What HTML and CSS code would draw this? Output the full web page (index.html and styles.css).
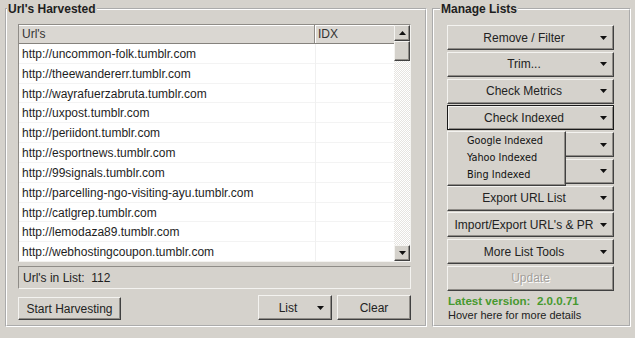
FILE: index.html
```html
<!DOCTYPE html>
<html lang="en">
<head>
  <meta charset="UTF-8">
  <title>Url Harvester</title>
  <link rel="stylesheet" href="styles.css">
</head>
<body>
  <div class="window">
    <fieldset class="group harvest">
      <legend>Url's Harvested</legend>
      <div class="group-body">
        <div class="listview">
          <div class="columns">
            <div class="header">
              <div class="col-url">Url's</div>
              <div class="col-idx">IDX</div>
            </div>
            <div class="row"><div class="col-url">http://uncommon-folk.tumblr.com</div><div class="col-idx"></div></div>
            <div class="row"><div class="col-url">http://theewandererr.tumblr.com</div><div class="col-idx"></div></div>
            <div class="row"><div class="col-url">http://wayrafuerzabruta.tumblr.com</div><div class="col-idx"></div></div>
            <div class="row"><div class="col-url">http://uxpost.tumblr.com</div><div class="col-idx"></div></div>
            <div class="row"><div class="col-url">http://periidont.tumblr.com</div><div class="col-idx"></div></div>
            <div class="row"><div class="col-url">http://esportnews.tumblr.com</div><div class="col-idx"></div></div>
            <div class="row"><div class="col-url">http://99signals.tumblr.com</div><div class="col-idx"></div></div>
            <div class="row"><div class="col-url">http://parcelling-ngo-visiting-ayu.tumblr.com</div><div class="col-idx"></div></div>
            <div class="row"><div class="col-url">http://catlgrep.tumblr.com</div><div class="col-idx"></div></div>
            <div class="row"><div class="col-url">http://lemodaza89.tumblr.com</div><div class="col-idx"></div></div>
            <div class="row"><div class="col-url">http://webhostingcoupon.tumblr.com</div><div class="col-idx"></div></div>
          </div>
          <div class="scrollbar">
            <div class="sb-btn"><svg width="7" height="4" viewBox="0 0 7 4"><path d="M3.5 0L7 4H0z"/></svg></div>
            <div class="sb-thumb"></div>
            <div class="sb-track"></div>
            <div class="sb-btn"><svg width="7" height="4" viewBox="0 0 7 4"><path d="M0 0h7L3.5 4z"/></svg></div>
          </div>
        </div>
        <div class="status">Url's in List:&nbsp; 112</div>
        <div class="actions">
          <button class="btn start">Start Harvesting</button>
          <button class="btn list"><span class="label">List</span><svg class="caret" width="7" height="4" viewBox="0 0 7 4"><path d="M0 0h7L3.5 4z"/></svg></button>
          <button class="btn clear">Clear</button>
        </div>
      </div>
    </fieldset>

    <fieldset class="group manage">
      <legend>Manage Lists</legend>
      <div class="group-body">
        <div class="tools">
          <button class="btn tool"><span class="label">Remove / Filter</span><svg class="caret" width="7" height="4" viewBox="0 0 7 4"><path d="M0 0h7L3.5 4z"/></svg></button>
          <button class="btn tool"><span class="label">Trim...</span><svg class="caret" width="7" height="4" viewBox="0 0 7 4"><path d="M0 0h7L3.5 4z"/></svg></button>
          <button class="btn tool"><span class="label">Check Metrics</span><svg class="caret" width="7" height="4" viewBox="0 0 7 4"><path d="M0 0h7L3.5 4z"/></svg></button>
          <button class="btn tool open"><span class="label">Check Indexed</span><svg class="caret" width="7" height="4" viewBox="0 0 7 4"><path d="M0 0h7L3.5 4z"/></svg></button>
          <button class="btn tool"><span class="label"></span><svg class="caret" width="7" height="4" viewBox="0 0 7 4"><path d="M0 0h7L3.5 4z"/></svg></button>
          <button class="btn tool"><span class="label"></span><svg class="caret" width="7" height="4" viewBox="0 0 7 4"><path d="M0 0h7L3.5 4z"/></svg></button>
          <button class="btn tool"><span class="label">Export URL List</span><svg class="caret" width="7" height="4" viewBox="0 0 7 4"><path d="M0 0h7L3.5 4z"/></svg></button>
          <button class="btn tool"><span class="label">Import/Export URL's &amp; PR</span><svg class="caret" width="7" height="4" viewBox="0 0 7 4"><path d="M0 0h7L3.5 4z"/></svg></button>
          <button class="btn tool"><span class="label">More List Tools</span><svg class="caret" width="7" height="4" viewBox="0 0 7 4"><path d="M0 0h7L3.5 4z"/></svg></button>
          <button class="btn tool disabled" disabled><span class="label">Update</span></button>
        </div>
        <div class="popup">
          <div>Google Indexed</div>
          <div>Yahoo Indexed</div>
          <div>Bing Indexed</div>
        </div>
        <div class="version">
          <div class="latest">Latest version:&nbsp; 2.0.0.71</div>
          <div class="hint">Hover here for more details</div>
        </div>
      </div>
    </fieldset>
  </div>
</body>
</html>
```

FILE: styles.css
```css
body {
  margin: 0;
  background-color: #d5d2cc;
  font-family: "Liberation Sans", Arial, sans-serif;
  font-size: 12px;
  color: #1e1e1e;
}

.window {
  display: flex;
  gap: 5px;
  padding: 2px 0 0 5px;
}

.group {
  margin: 0;
  padding: 0;
  min-width: 0;
  height: 325px;
  box-sizing: border-box;
  border: 2px groove #fff;
}

.harvest {
  width: 422px;
}

.manage {
  width: 199px;
}

legend {
  padding: 0 1px;
  font-weight: bold;
  line-height: 14px;
  color: #1e1e1e;
}

.manage legend {
  margin-left: 6px;
}

.harvest .group-body {
  padding: 8px 14px 0 11px;
}

.manage .group-body {
  position: relative;
  padding: 9px 15px 0 13px;
}

/* list view */
.listview {
  display: flex;
  height: 238px;
  box-sizing: border-box;
  border: 1px solid;
  border-color: #8f8c87 #f4f3f0 #f4f3f0 #8f8c87;
  background-color: #fff;
}

.columns {
  flex: 1;
  overflow: hidden;
}

.header {
  display: flex;
  height: 19px;
  box-sizing: border-box;
  background-color: #dad7d2;
  border-bottom: 1px solid #85827d;
  box-shadow: inset 0 1px #fff;
  line-height: 18px;
  color: #333;
}

.col-url {
  width: 296px;
  padding-left: 3px;
  box-sizing: border-box;
  white-space: nowrap;
}

.col-idx {
  flex: 1;
  padding-left: 3px;
}

.header .col-url {
  border-right: 1px solid #8f8c87;
}

.header .col-idx {
  box-shadow: inset 1px 0 #fff;
}

.row {
  display: flex;
  height: 19.84px;
  line-height: 21px;
  box-shadow: inset 0 -1px #f3f3f3;
}

.row .col-idx {
  border-left: 1px solid #f0f0f0;
}

.scrollbar {
  width: 16px;
  display: flex;
  flex-direction: column;
}

.sb-btn,
.sb-thumb {
  box-sizing: border-box;
  background-color: #d5d2cc;
  border: 1px solid;
  border-color: #f4f3f0 #404040 #404040 #f4f3f0;
  box-shadow: inset -1px -1px #8f8c87;
}

.sb-btn {
  height: 16px;
  display: flex;
  align-items: center;
  justify-content: center;
}

.sb-btn svg {
  fill: #111;
}

.sb-thumb {
  height: 20px;
}

.sb-track {
  flex: 1;
  background: repeating-conic-gradient(#fff 0 25%, #e6e4e0 0 50%) 0 0 / 2px 2px;
}

.status {
  margin-top: 4px;
  height: 23px;
  box-sizing: border-box;
  border: 1px solid;
  border-color: #8f8c87 #f4f3f0 #f4f3f0 #8f8c87;
  padding: 2px 0 0 4px;
  line-height: 19px;
}

.actions {
  display: flex;
  align-items: flex-end;
  gap: 5px;
  margin-top: 6px;
  height: 25px;
}

/* buttons */
.btn {
  display: flex;
  align-items: center;
  justify-content: center;
  padding: 0;
  box-sizing: border-box;
  font: inherit;
  color: #222;
  background-color: #d5d2cc;
  border: 1px solid;
  border-color: #f4f3f0 #404040 #404040 #f4f3f0;
  box-shadow: inset -1px -1px #8f8c87;
}

.btn .label {
  flex: 1;
  text-align: center;
  white-space: nowrap;
}

.btn .caret {
  flex: none;
  fill: #111;
}

.start {
  width: 103px;
  height: 23px;
}

.list {
  width: 74px;
  height: 25px;
  margin-left: auto;
}

.list .caret {
  margin-right: 7px;
}

.clear {
  width: 74px;
  height: 25px;
}

.tools {
  display: flex;
  flex-direction: column;
  gap: 1.78px;
}

.tool {
  width: 100%;
  height: 25px;
}

.tool .caret {
  margin-right: 6px;
}

.tool.open {
  border-color: #1a1a1a;
  box-shadow: inset 1px 1px #f4f3f0, inset -1px -1px #8f8c87;
}

.tool.disabled {
  color: #a3a09b;
  text-shadow: 1px 1px #fff;
}

/* Check Indexed drop menu */
.popup {
  position: absolute;
  left: 13px;
  top: 115px;
  width: 119px;
  height: 55px;
  box-sizing: border-box;
  background-color: #d5d2cc;
  border: 1px solid;
  border-color: #f4f3f0 #404040 #404040 #f4f3f0;
  box-shadow: inset -1px -1px #8f8c87;
  font-family: "DejaVu Sans Condensed", "DejaVu Sans", sans-serif;
  font-stretch: condensed;
  font-size: 10.8px;
  color: #111;
}

.popup div {
  line-height: 17px;
  padding-left: 19px;
}

.version {
  margin-top: 3px;
  padding-left: 1px;
  line-height: 14px;
}

.latest {
  color: #47992f;
  font-weight: bold;
  font-size: 11.6px;
}

.hint {
  font-size: 11px;
  color: #222;
}
```
